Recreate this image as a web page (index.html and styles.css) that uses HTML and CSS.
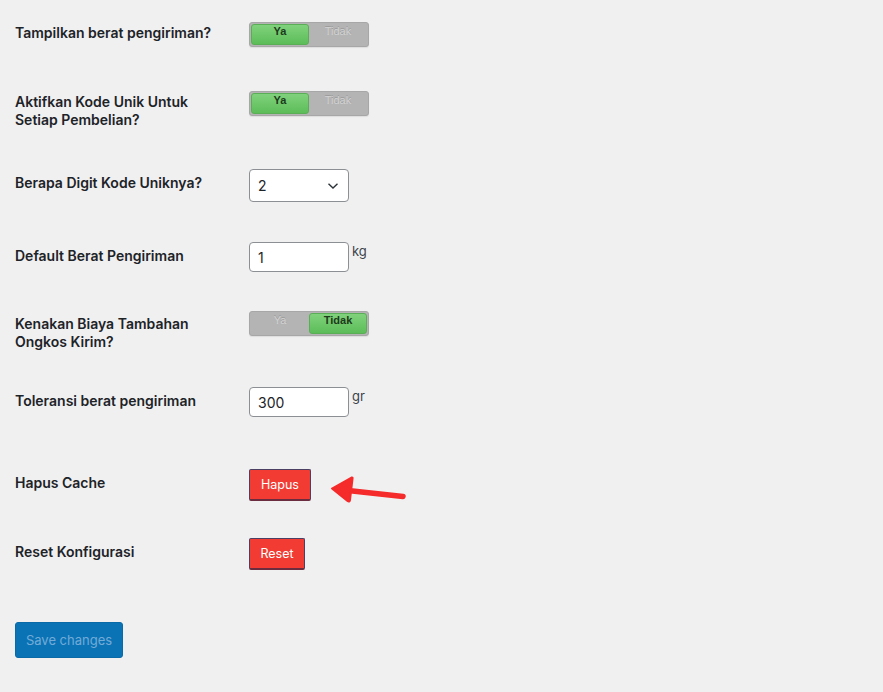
FILE: index.html
```html
<!DOCTYPE html>
<html lang="id">
<head>
<meta charset="utf-8">
<title>Pengaturan</title>
<link rel="stylesheet" href="styles.css">
</head>
<body>
<div class="page">
  <div class="form">
    <div class="row r1">
      <div class="label">Tampilkan berat pengiriman?</div>
      <div class="field">
        <div class="toggle"><span class="seg on">Ya</span><span class="seg off">Tidak</span></div>
      </div>
    </div>
    <div class="row r2">
      <div class="label">Aktifkan Kode Unik Untuk Setiap Pembelian?</div>
      <div class="field">
        <div class="toggle"><span class="seg on">Ya</span><span class="seg off">Tidak</span></div>
      </div>
    </div>
    <div class="row r3">
      <div class="label">Berapa Digit Kode Uniknya?</div>
      <div class="field">
        <div class="select"><span>2</span>
          <svg class="chev" width="12" height="8" viewBox="0 0 12 8"><path d="M1.5 1.8 L6 6 L10.5 1.8" fill="none" stroke="#2c3338" stroke-width="1.4"/></svg>
        </div>
      </div>
    </div>
    <div class="row r4">
      <div class="label">Default Berat Pengiriman</div>
      <div class="field">
        <div class="input">1</div><span class="unit">kg</span>
      </div>
    </div>
    <div class="row r5">
      <div class="label">Kenakan Biaya Tambahan Ongkos Kirim?</div>
      <div class="field">
        <div class="toggle"><span class="seg off">Ya</span><span class="seg on">Tidak</span></div>
      </div>
    </div>
    <div class="row r6">
      <div class="label">Toleransi berat pengiriman</div>
      <div class="field">
        <div class="input">300</div><span class="unit">gr</span>
      </div>
    </div>
    <div class="row r7">
      <div class="label">Hapus Cache</div>
      <div class="field">
        <button class="btn-red hapus">Hapus</button>
      </div>
    </div>
    <div class="row r8">
      <div class="label">Reset Konfigurasi</div>
      <div class="field">
        <button class="btn-red reset">Reset</button>
      </div>
    </div>
  </div>
  <button class="save">Save changes</button>
</div>
<svg class="arrow" width="90" height="40" viewBox="0 0 90 40">
  <path d="M81 27.5 L26 21.5" stroke="#f52a2a" stroke-width="5.5" stroke-linecap="round" fill="none"/>
  <path d="M10 19.5 L29.5 8.5 Q31 8 30.5 10 L28 31 Q27.5 33.5 25.5 32 Z" fill="#f52a2a" stroke="#f52a2a" stroke-width="2" stroke-linejoin="round"/>
</svg>
</body>
</html>
```
FILE: styles.css
```css
html, body {
  margin: 0;
  padding: 0;
  background: #f0f0f1;
}
body {
  width: 883px;
  height: 692px;
  overflow: hidden;
  position: relative;
  font-family: Inter, "Liberation Sans", Arial, sans-serif;
  color: #1d2327;
}
.page {
  padding: 22px 0 0 15px;
}
.form {
  display: flex;
  flex-direction: column;
}
.row {
  display: flex;
  align-items: flex-start;
}
.r1 { height: 69px; }
.r2 { height: 78px; }
.r3 { height: 73px; }
.r4 { height: 69px; }
.r5 { height: 76px; }
.r6 { height: 82px; }
.r7 { height: 69px; }
.r8 { height: 84px; }
.label {
  width: 234px;
  flex: none;
  padding: 5px 34px 0 0;
  box-sizing: border-box;
  font-size: 14px;
  font-weight: 600;
  line-height: 18px;
}
.r1 .label, .r2 .label { padding-top: 2px; }
.r5 .label { padding-top: 4px; }
.field {
  display: flex;
  align-items: flex-start;
}
.toggle {
  width: 120px;
  height: 25px;
  box-sizing: border-box;
  border: 1px solid #a7a7a7;
  border-radius: 3px;
  background: #b4b4b4;
  padding: 1px;
  display: flex;
  box-shadow: 0 1px 1px rgba(0,0,0,0.08);
}
.seg {
  width: 58px;
  height: 21px;
  box-sizing: border-box;
  text-align: center;
  font-family: "Liberation Sans", Arial, sans-serif;
  font-size: 11px;
  line-height: 12px;
  border-radius: 3px;
}
.seg.on {
  background: linear-gradient(#80d27c, #5cbd58);
  border: 1px solid #5aae55;
  color: #1e3a1c;
  font-weight: 700;
}
.seg.off {
  color: #d2d2d2;
  text-shadow: 0 -1px 0 #9c9c9c;
  padding-top: 1px;
}
.select {
  width: 100px;
  height: 33px;
  box-sizing: border-box;
  border: 1px solid #8c8f94;
  border-radius: 4px;
  background: #fff;
  display: flex;
  align-items: center;
  justify-content: space-between;
  padding: 0 9px 0 8px;
  font-size: 14px;
}
.input {
  width: 100px;
  height: 30px;
  box-sizing: border-box;
  border: 1px solid #8c8f94;
  border-radius: 4px;
  background: #fff;
  padding: 5px 8px 0;
  font-size: 14px;
  line-height: 20px;
}
.unit {
  font-size: 13px;
  line-height: 16px;
  margin-left: 3px;
  padding-top: 1px;
  color: #3c434a;
}
.btn-red {
  background: #f23b33;
  color: #fff;
  font-family: Inter, "Liberation Sans", Arial, sans-serif;
  font-size: 12.5px;
  font-weight: 400;
  border: 1px solid #4b3f63;
  border-bottom: 2px solid #6a2c3e;
  border-radius: 2px;
  height: 32px;
  padding: 0 10px;
  margin: 0;
}
.hapus { width: 62px; }
.reset { width: 56px; }
.save {
  display: block;
  width: 108px;
  height: 36px;
  background: #0a73b6;
  color: #72abd6;
  border: 1px solid #0a6aa8;
  border-radius: 3px;
  font-family: Inter, "Liberation Sans", Arial, sans-serif;
  font-size: 13px;
  padding: 0;
  margin: 0;
}
.arrow {
  position: absolute;
  left: 322px;
  top: 469px;
}
```
